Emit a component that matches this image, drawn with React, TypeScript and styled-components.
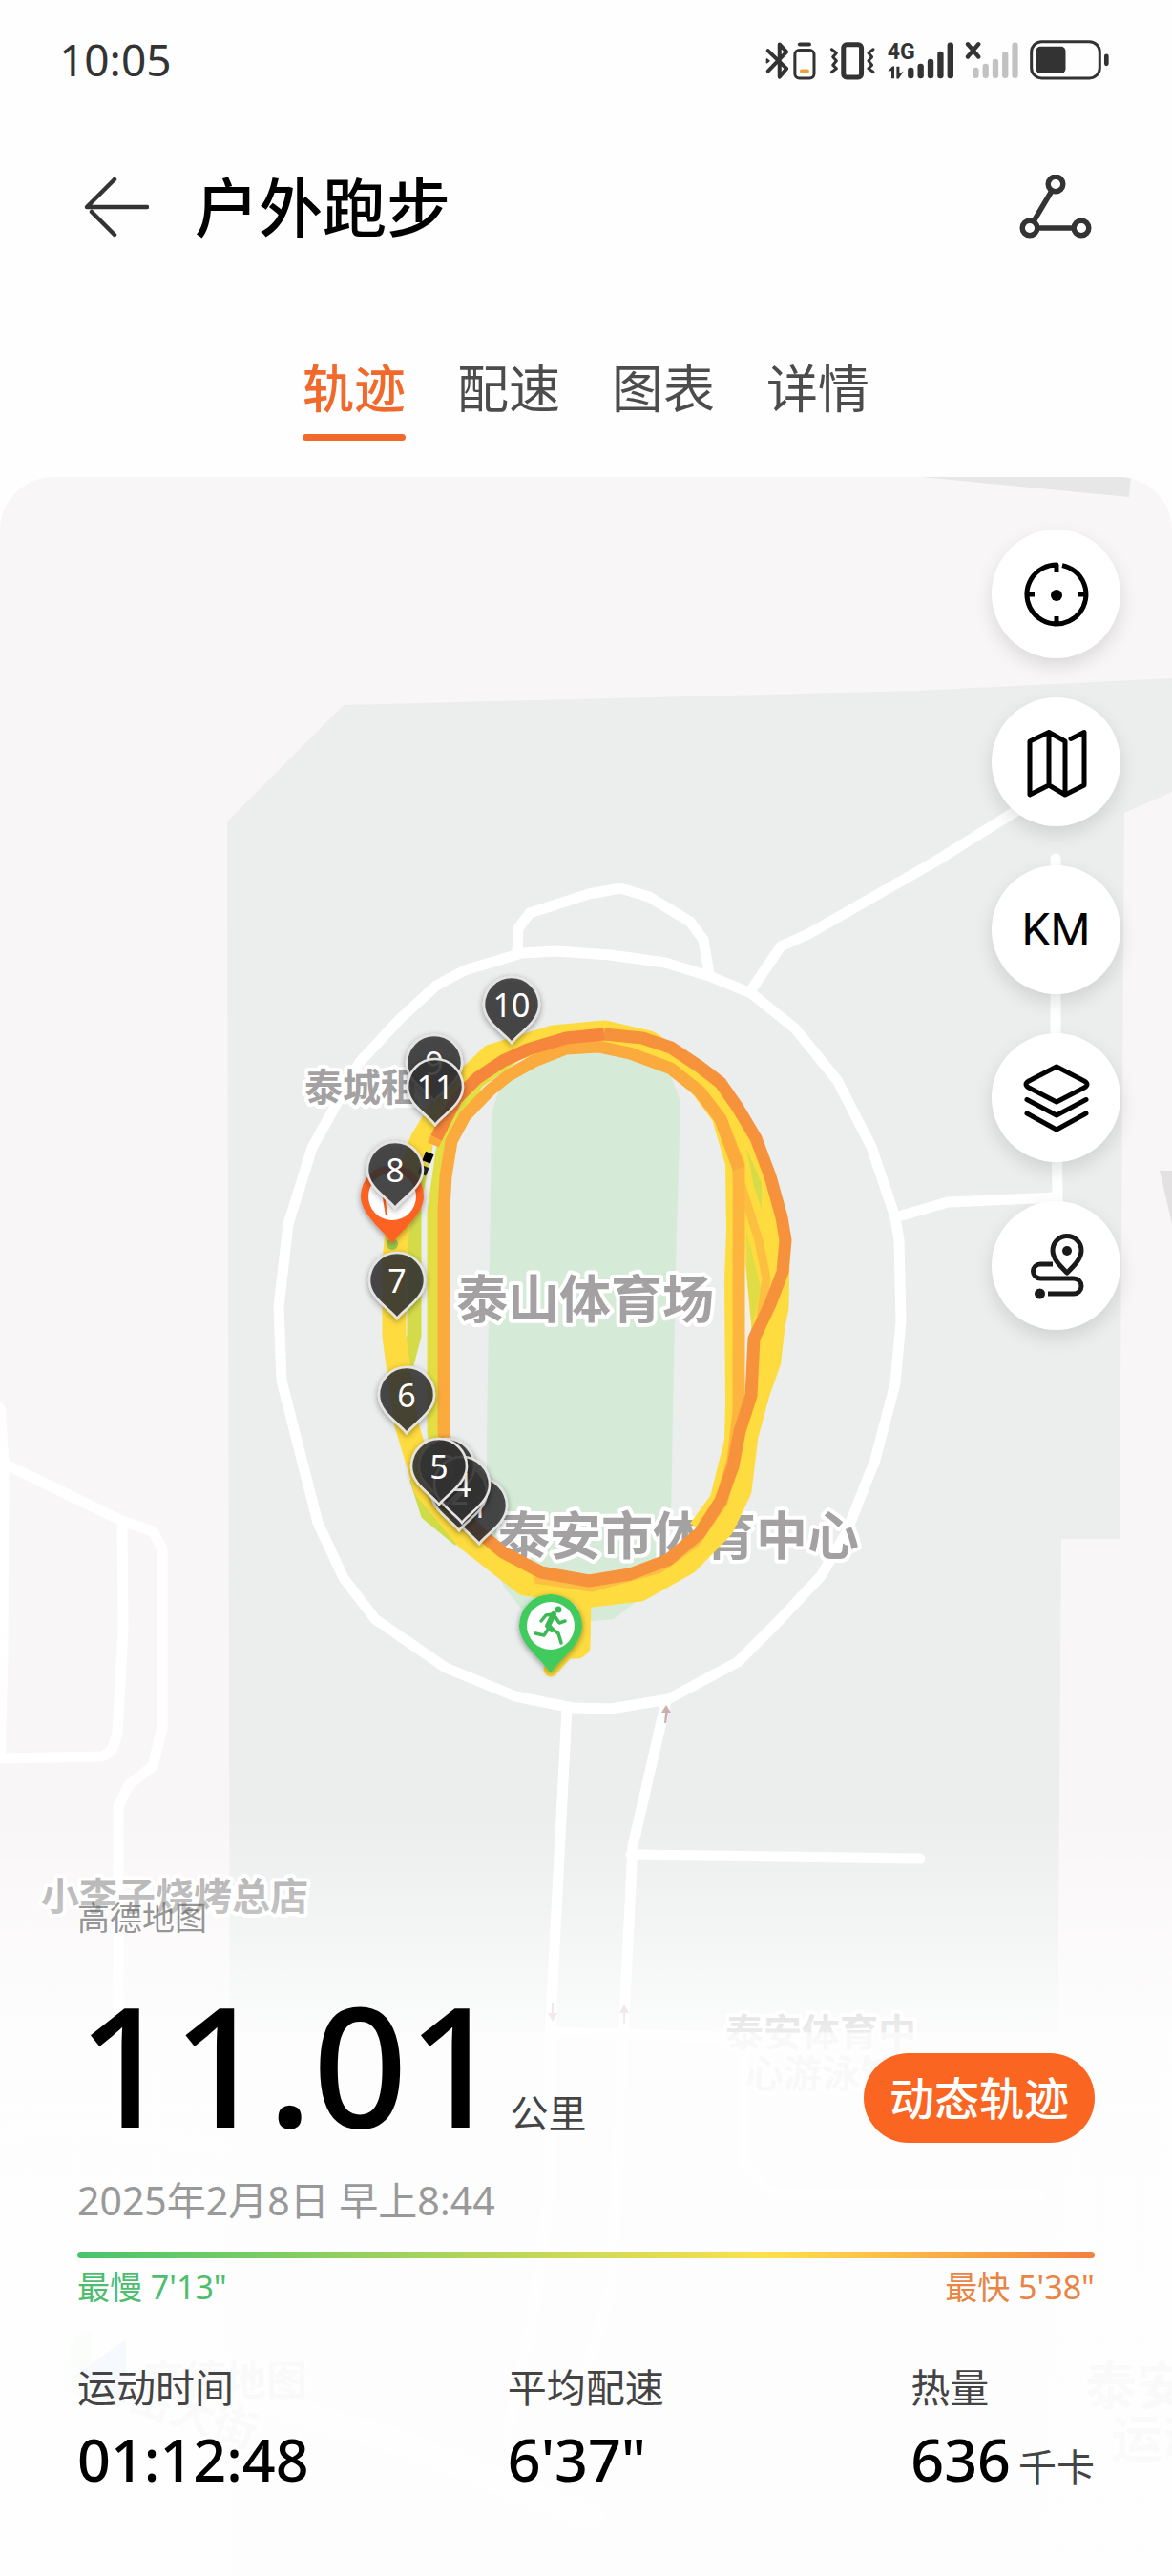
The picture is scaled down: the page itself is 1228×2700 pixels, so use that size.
import React, { useState } from "react";
import styled, { createGlobalStyle } from "styled-components";

const sans = `"Noto Sans", "Noto Sans CJK SC", sans-serif`;

const GlobalStyle = createGlobalStyle`
  *, *::before, *::after { box-sizing: border-box; }
  body { margin: 0; background: #fefefe; font-family: ${sans}; color: #000; }
  button { font-family: inherit; border: 0; padding: 0; background: none; color: inherit; cursor: pointer; }
  h1, p, dl, dd, dt { margin: 0; }
  svg { display: block; }
`;

const Page = styled.div`
  min-height: 100vh;
  display: flex;
  flex-direction: column;
`;

const StatusBar = styled.div`
  height: 124px;
  padding: 0 64px 0 62px;
  display: flex;
  align-items: center;
  justify-content: space-between;
  color: #333;
`;

const Clock = styled.time`
  font-size: 46px;
  line-height: 48px;
`;

const StatusIcons = styled.div`
  display: flex;
  align-items: center;
  gap: 10px;
`;

const NetworkType = styled.text`
  font-family: Roboto, sans-serif;
  font-size: 69px;
  font-weight: 700;
`;

const Header = styled.header`
  height: 186px;
  padding: 0 82px 0 82px;
  display: flex;
  align-items: center;
  gap: 42px;
`;

const IconButton = styled.button<{ $end?: boolean }>`
  width: 80px;
  height: 80px;
  display: grid;
  place-items: center;
  margin-left: ${(p) => (p.$end ? "auto" : "0")};
`;

const Title = styled.h1`
  font-size: 67px;
  line-height: 80px;
  font-weight: 500;
`;

const Tabs = styled.div`
  display: flex;
  justify-content: center;
  gap: 54px;
  padding: 61px 0 38px;
`;

const Tab = styled.button<{ $active: boolean }>`
  font-size: 54px;
  line-height: 72px;
  font-weight: ${(p) => (p.$active ? 500 : 400)};
  color: ${(p) => (p.$active ? "#f26a2b" : "#4c4c4c")};

  &::after {
    content: "";
    display: block;
    height: 7px;
    margin-top: 12px;
    border-radius: 4px;
    background: ${(p) => (p.$active ? "#f26a2b" : "transparent")};
  }
`;

const MapSection = styled.main`
  position: relative;
  flex: 1;
  display: flex;
  flex-direction: column;
  overflow: hidden;
  border-radius: 56px 56px 0 0;
  background: #f9f6f7;
`;

const MapCanvas = styled.svg`
  position: absolute;
  inset: 0;
  width: 100%;
  height: 100%;
`;

const MapLabel = styled.text<{ $size: number }>`
  font-family: ${sans};
  font-size: ${(p) => p.$size}px;
  font-weight: 700;
  fill: #a3a1a2;
  stroke: #fff;
  stroke-width: 8px;
  stroke-linejoin: round;
  paint-order: stroke;
`;

const PinNumber = styled.text`
  font-family: ${sans};
  font-size: 34px;
  fill: #fff;
  text-anchor: middle;
`;

const Tools = styled.div`
  position: relative;
  align-self: flex-end;
  display: flex;
  flex-direction: column;
  gap: 41px;
  padding: 55px 54px 60px;
`;

const ToolButton = styled.button`
  width: 135px;
  height: 135px;
  border-radius: 50%;
  background: #fff;
  color: #000;
  display: grid;
  place-items: center;
  box-shadow: 0 8px 20px rgba(0, 0, 0, 0.12);
  font-family: Roboto, sans-serif;
  font-size: 48px;
  line-height: 56px;
`;

const Summary = styled.section`
  position: relative;
  margin-top: auto;
  padding: 88px 81px 90px;
  background: linear-gradient(
    to bottom,
    rgba(255, 255, 255, 0) 0,
    rgba(255, 255, 255, 0.8) 230px,
    rgba(254, 254, 254, 0.94) 231px,
    rgba(254, 254, 254, 0.96) 100%
  );
`;

const Attribution = styled.p`
  font-size: 34px;
  line-height: 44px;
  color: rgba(90, 90, 90, 0.65);
`;

const DistanceRow = styled.div`
  display: flex;
  align-items: baseline;
  gap: 8px;
  margin-top: 44px;
`;

const Distance = styled.span`
  font-size: 174px;
  line-height: 174px;
  font-weight: 500;
`;

const Unit = styled.span`
  font-size: 40px;
  line-height: 48px;
  font-weight: 400;
  color: #444;
`;

const ReplayButton = styled.button`
  align-self: flex-end;
  margin: 0 0 4px auto;
  padding: 0 27px;
  height: 94px;
  border-radius: 47px;
  background: #fb6522;
  color: #fff;
  font-size: 47px;
  line-height: 56px;
  font-weight: 500;
`;

const DateLine = styled.p`
  margin-top: 32px;
  font-size: 41px;
  line-height: 48px;
  color: #999;
`;

const PaceBar = styled.div`
  height: 7px;
  margin-top: 30px;
  border-radius: 4px;
  background: linear-gradient(to right, #48c46c, #d0da55 50%, #fee04a 68%, #f3803f);
`;

const PaceRange = styled.div`
  display: flex;
  justify-content: space-between;
  margin-top: 10px;
  font-size: 34px;
  line-height: 40px;
`;

const PaceEnd = styled.span<{ $color: string }>`
  color: ${(p) => p.$color};
`;

const Stats = styled.dl`
  display: grid;
  grid-template-columns: 16fr 15fr auto;
  margin-top: 61px;
`;

const StatLabel = styled.dt`
  font-size: 41px;
  line-height: 48px;
  color: #444;
`;

const StatValue = styled.dd`
  margin-top: 20px;
  display: flex;
  align-items: baseline;
  gap: 8px;
  height: 64px;
  font-size: 61px;
  line-height: 64px;
  font-weight: 500;
`;

/* ---------- status bar drawings ---------- */

const BluetoothIcon = () => (
  <svg width="57" height="47" viewBox="60 50 170 140" fill="none" stroke="#333" strokeWidth="12" strokeLinejoin="round" strokeLinecap="round">
    <path d="M74 92 L132 148 L110 174 V72 L132 96 L74 156" />
    <path d="M70 118 v12 l8 -6z" fill="#333" strokeWidth="4" />
    <rect x="158" y="90" width="60" height="88" rx="14" strokeWidth="9" />
    <path d="M173 72 H203" />
    <path d="M179 156 H197" stroke="#eca43a" />
  </svg>
);

const VibrateIcon = () => (
  <svg width="52" height="47" viewBox="255 50 155 140" fill="none" stroke="#333" strokeWidth="9" strokeLinejoin="round" strokeLinecap="round">
    <rect x="305" y="73" width="56" height="102" rx="10" strokeWidth="15" />
    <path d="M268 88 l15 11 -11 13 11 12 -11 13 11 11 -15 11 M398 88 l-15 11 11 13 -11 12 11 13 -11 11 15 11" />
  </svg>
);

const bars = [
  [0, 34],
  [31, 46],
  [62, 61],
  [93, 85],
  [124, 113],
];

const SignalIcon = () => (
  <svg width="72" height="47" viewBox="440 50 215 140" fill="#333" overflow="visible">
    <NetworkType x="442" y="119">4G</NetworkType>
    <path d="M444 156 L458 141 h6 v38 h-9 v-24z M471 142 h9 v22 l13 -8 -15 24 h-7z" />
    {bars.map(([x, h]) => (
      <rect key={x} x={506 + x} y={179 - h} width="19" height={h} rx="9" />
    ))}
  </svg>
);

const NoSimIcon = () => (
  <svg width="57" height="47" viewBox="688 50 172 140">
    <path d="M697 71 L731 111 M731 71 L697 111" stroke="#333" strokeWidth="13" strokeLinecap="round" />
    {bars.map(([x, h]) => (
      <rect key={x} x={713 + x} y={179 - h} width="19" height={h} rx="9" fill="#c2c2c2" />
    ))}
  </svg>
);

const BatteryIcon = () => (
  <svg width="86" height="47" viewBox="893 50 257 140">
    <rect x="901" y="64" width="214" height="114" rx="32" fill="none" stroke="#333" strokeWidth="9" />
    <rect x="915" y="79" width="93" height="84" rx="14" fill="#333" />
    <rect x="1129" y="102" width="14" height="38" rx="7" fill="#333" />
  </svg>
);

/* ---------- header drawings ---------- */

const BackIcon = () => (
  <svg width="68" height="66" viewBox="0 0 68 66" fill="none" stroke="#333" strokeWidth="4.5" strokeLinecap="round" strokeLinejoin="round">
    <path d="M66 33 H3 L32 4 M8 38 L32 62" />
  </svg>
);

const ShareIcon = () => (
  <svg width="76" height="68" viewBox="0 0 76 68" fill="none" stroke="#333" strokeWidth="5.5">
    <circle cx="38" cy="10" r="7.8" />
    <circle cx="11" cy="56" r="7.8" />
    <circle cx="65" cy="56" r="7.8" />
    <path d="M34 17 L15 49 M19 56 H57" />
  </svg>
);

/* ---------- map tool drawings ---------- */

const ToolSvg = styled.svg.attrs({ width: 72, height: 72, viewBox: "0 0 72 72" })`
  fill: none;
  stroke: currentColor;
  stroke-width: 5px;
  stroke-linecap: round;
  stroke-linejoin: round;
  overflow: visible;
`;

const LocateIcon = () => (
  <ToolSvg>
    <path d="M42 5.6 A31 31 0 1 1 36 5 V13 M5 36 H13 M67 36 H59 M36 67 V59" strokeLinecap="butt" />
    <circle cx="36" cy="37" r="6" fill="currentColor" stroke="none" />
  </ToolSvg>
);

const MapIcon = () => (
  <ToolSvg>
    <path d="M51 11.5 L65 4.5 V60 L45 70 L28 60 L8 70 V14 L28 4.5 L45 14 V70 M28 4.5 V60" />
  </ToolSvg>
);

const LayersIcon = () => (
  <ToolSvg>
    <path d="M36 3 L65 18 Q71 21.5 65 25 L36 40 L7 25 Q1 21.5 7 18 Z M5 37.5 L36 54 L67 37.5 M5 52 L36 69 L67 52" />
  </ToolSvg>
);

const RouteIcon = () => (
  <ToolSvg>
    <g stroke="#1a1a1a" strokeLinecap="butt">
      <path d="M47 43 C41 37 32 29 32 19.500 a15 15 0 0 1 30 0 C62 29 53 37 47 43Z" />
      <path d="M32 34 H19 a7.500 7.500 0 0 0 0 15 H54 a8 8 0 0 1 0 16 H27" />
      <circle cx="47" cy="20" r="5" fill="#1a1a1a" stroke="none" />
      <circle cx="18.500" cy="65" r="5.500" fill="#1a1a1a" stroke="none" />
    </g>
  </ToolSvg>
);

/* ---------- map ---------- */

const roads = [
  "M540 1001 L547 999 583 997 640 1001 697 1009 743 1023 787 1041 833 1078 877 1132 913 1202 938 1276 942 1300 944 1385 938 1450 917 1530 887 1606 860 1652 813 1702 773 1742 700 1781 640 1791 600 1790 540 1778 467 1748 393 1697 360 1654 333 1596 295 1447 292 1370 302 1283 327 1203 377 1113 420 1067 457 1033 487 1017Z",
  "M542 998 L543 973 555 957 617 937 650 931 680 940 723 966 737 985 743 1020",
  "M787 1038 L818 992 847 979 980 903 1060 853 1106 826",
  "M1106 900 L1106 1080 1108 1255 993 1260 938 1276",
  "M1108 1255 V1340",
  "M0 1476 L4 1534 3 1735 0 1843 107 1841 117 1835 123 1817 129 1708 128 1594",
  "M4 1534 L128 1594 160 1605 170 1623 170 1811 160 1851 135 1871 124 1893 124 2230",
  "M594 1791 L577 2118 575 2300 558 2430 530 2560",
  "M697 1787 L663 1935 654 2118 640 2400 610 2500",
  "M661 1944 L964 1948",
  "M577 2130 L780 2136 V2270 L808 2300 H1090",
  "M0 2240 Q30 2225 110 2232 L240 2252",
];

const mainTrack =
  "M633 1084 L593 1088 553 1100 527 1112 500 1130 478 1152 462 1183";
const mainTrackRight =
  "M503 1607 L527 1627 567 1648 617 1657 660 1650 700 1635 733 1607 755 1573 768 1537 775 1500 787 1463 790 1403 807 1367 820 1333 823 1300 819 1276 807 1233 792 1193 773 1161 755 1135 733 1118 703 1098 673 1088 633 1084";

const kmPins: [string, number, number][] = [
  ["1", 502, 1579],
  ["2", 481, 1565],
  ["3", 468, 1538],
  ["4", 484, 1557],
  ["5", 460, 1538],
  ["6", 426, 1463],
  ["7", 416, 1343],
  ["8", 414, 1227],
  ["9", 455, 1115],
  ["10", 536, 1054],
  ["11", 456, 1140],
];

const KmPin = ({ label, x, y }: { label: string; x: number; y: number }) => (
  <g transform={`translate(${x} ${y})`}>
    <path
      d="M0 39 C-7 29 -29 18 -29 -1 A29 29 0 0 1 29 -1 C29 18 7 29 0 39Z"
      fill="#333"
      fillOpacity="0.84"
      stroke="#e6e4e3"
      strokeWidth="2.5"
      filter="url(#pinShadow)"
    />
    <PinNumber y="12">{label}</PinNumber>
  </g>
);

const BigPin = ({ x, y, color, children }: { x: number; y: number; color: string; children: React.ReactNode }) => (
  <g transform={`translate(${x} ${y})`}>
    <path d="M0 50 C-8 36 -33 20 -33 0 A33 33 0 0 1 33 0 C33 20 8 36 0 50Z" fill={color} filter="url(#pinShadow)" />
    <circle r="25" fill="#fff" />
    {children}
  </g>
);

const TrackMap = () => (
  <MapCanvas viewBox="0 500 1228 2200" preserveAspectRatio="xMidYMin slice" role="img" aria-label="泰山体育场跑步轨迹">
    <defs>
      <filter id="pinShadow" x="-30%" y="-30%" width="160%" height="160%">
        <feDropShadow dx="0" dy="2" stdDeviation="3" floodColor="#000" floodOpacity="0.4" />
      </filter>
    </defs>

    <path d="M238 861 L360 739 960 724 1228 711 V830 L1178 852 1173 1613 H1112 L1107 2300 1090 2700 H242Z" fill="#ebeeed" />
    <path d="M965 500 L1183 521 1185 500Z" fill="#e8e7e7" />
    <path d="M1215 1227 H1228 V1283Z" fill="#e3e1e2" />
    <path
      d="M515 1167 L525 1135 560 1110 610 1098 640 1103 703 1127 713 1155 708 1330 703 1590 690 1660 643 1697 615 1700 547 1687 527 1662 510 1600 510 1500 513 1320Z"
      fill="#d5ebd8"
    />

    <g fill="none" stroke="#fff" strokeWidth="11" strokeLinejoin="round" strokeLinecap="round">
      {roads.map((d) => (
        <path key={d} d={d} />
      ))}
      <path d="M0 2435 L150 2480 420 2560 620 2640" strokeWidth="26" />
    </g>

    <g fill="#cdaeb0">
      <path d="M698 1787 l5 8 h-3 l-2 11 h-2 l1 -11 h-4z" />
      <path d="M654 2101 l5 9 h-4 v11 h-2 v-11 h-4z" />
      <path d="M579 2119 l5 -9 h-4 v-11 h-2 v11 h-4z" />
    </g>

    <MapLabel x="478" y="1382" $size={54}>泰山体育场</MapLabel>
    <MapLabel x="522" y="1630" $size={54}>泰安市体育中心</MapLabel>
    <MapLabel x="319" y="1154" $size={40}>泰城租</MapLabel>
    <MapLabel x="43" y="2002" $size={40}>小李子烧烤总店</MapLabel>
    <MapLabel x="760" y="2145" $size={40}>泰安体育中</MapLabel>
    <MapLabel x="781" y="2188" $size={40}>心游泳馆</MapLabel>
    <MapLabel x="1137" y="2521" $size={54}>泰安</MapLabel>
    <MapLabel x="1164" y="2577" $size={54}>运动</MapLabel>
    <MapLabel x="88" y="2510" $size={46} transform="rotate(18 88 2510)">泰岳大街</MapLabel>
    <path d="M74 2462 q0 -18 22 -18 v70 q-22 0 -22 -16z" fill="#b5e8a0" />
    <path d="M78 2490 L132 2452 V2520 Q100 2500 78 2490Z" fill="#4a9cf0" />
    <MapLabel x="150" y="2511" $size={43}>高德地图</MapLabel>

    <g fill="none" strokeLinejoin="round">
      <path d="M446 1200 L434 1260 434 1400 426 1430" stroke="#d3dc48" strokeWidth="15" />
      <path d="M560 1092 L500 1135 464 1200 454 1270 454 1500 460 1540" stroke="#e3df43" strokeWidth="13" />
      <path d="M434 1550 L446 1588 480 1616" stroke="#cfdc48" strokeWidth="10" />
      <path
        d="M633 1082 L580 1087 515 1107 470 1150 442 1195 420 1260 413 1320 413 1400 425 1490 446 1560 490 1613 550 1660 620 1672 670 1666 720 1638 757 1600 775 1562 782 1505 802 1430 814 1370 815 1310 800 1240 762 1160 730 1126 680 1093Z"
        stroke="#fedb3e"
        strokeWidth="25"
      />
      <path d="M760 1165 L790 1200 818 1290 826 1360 818 1430 793 1500 785 1570 760 1590 740 1590 770 1500 787 1440 787 1390 781 1330 777 1210Z" fill="#fedb3e" />
      <path d="M728 1140 L752 1172 766 1220 767 1290 765 1340 766 1470 765 1510 750 1570 728 1600" stroke="#fedb3e" strokeWidth="12" />
      <path d="M612 1675 L611 1727 606 1731 594 1731 577 1750" stroke="#fedb3e" strokeWidth="15" strokeLinecap="round" />
      <path d="M782 1204 L798 1240 798 1267 790 1244Z" fill="#d6dc48" />
      <path d="M782 1290 L797 1350 788 1392 783 1340Z" fill="#dfdc46" />
      <path d="M781 1325 L787 1390 786 1404 780 1404Z" fill="#f3efe6" />
      <path d="M776 1240 L795 1300 803 1340 797 1380" stroke="#fdbf41" strokeWidth="9" />
      <path d="M774 1500 L758 1575 728 1618 690 1645 620 1664 560 1655" stroke="#fdbf41" strokeWidth="9" />
      <path d="M755 1577 L768 1530 774 1480 774 1221 755 1173" stroke="#fdb540" strokeWidth="13" />
      <path
        d="M774 1225 L755 1173 733 1144 703 1120 660 1104 627 1097 593 1099 560 1112 533 1127 513 1143 487 1170 473 1196 467 1233 465 1267 465 1500 470 1540"
        stroke="#fbab3d"
        strokeWidth="13"
      />
      <path d={mainTrackRight} stroke="#f7923c" strokeWidth="13" />
      <path d={mainTrack} stroke="#f5863b" strokeWidth="13" />
      <path d="M463 1181 L457 1193" stroke="#f5863b" strokeWidth="13" />
      <path d="M457 1193 L454 1200" stroke="#fba83d" strokeWidth="13" />
      <path d="M504 1608 L470 1572" stroke="#f0743a" strokeWidth="13" />
    </g>
    <rect x="444" y="1208" width="9" height="10" fill="#000" transform="rotate(22 448 1213)" />
    <rect x="439" y="1222" width="9" height="9" fill="#222" transform="rotate(22 443 1227)" />
    <circle cx="411" cy="1304" r="6" fill="#9ac94a" />

    <BigPin x={411} y={1254} color="#fc6420">
      <path d="M-9 0 L-6 19" stroke="#fc6420" strokeWidth="2.5" />
    </BigPin>
    {kmPins.map(([label, x, y]) => (
      <KmPin key={label} label={label} x={x} y={y} />
    ))}
    <BigPin x={577} y={1704} color="#3fcb5c">
      <circle cx="8" cy="-17" r="3.5" fill="#3cb955" />
      <path d="M3 -12 L-3 0 L1 4" fill="none" stroke="#3cb955" strokeWidth="6" strokeLinecap="round" strokeLinejoin="round" />
      <path
        d="M2 -12 L-5 -11 L-10 -5 M5 -9 L9 -3 L15 -5 M1 3 L8 8 L11 18 M-3 4 L-7 10 L-16 8"
        fill="none"
        stroke="#3cb955"
        strokeWidth="3.5"
        strokeLinecap="round"
        strokeLinejoin="round"
      />
    </BigPin>
  </MapCanvas>
);

const tabNames = ["轨迹", "配速", "图表", "详情"];

const stats = [
  { label: "运动时间", value: "01:12:48" },
  { label: "平均配速", value: "6'37\"" },
  { label: "热量", value: "636", unit: "千卡" },
];

export default function App() {
  const [active, setActive] = useState(0);

  return (
    <Page>
      <GlobalStyle />
      <StatusBar>
        <Clock>10:05</Clock>
        <StatusIcons>
          <BluetoothIcon />
          <VibrateIcon />
          <SignalIcon />
          <NoSimIcon />
          <BatteryIcon />
        </StatusIcons>
      </StatusBar>

      <Header>
        <IconButton aria-label="返回">
          <BackIcon />
        </IconButton>
        <Title>户外跑步</Title>
        <IconButton $end aria-label="分享">
          <ShareIcon />
        </IconButton>
      </Header>

      <Tabs role="tablist">
        {tabNames.map((name, i) => (
          <Tab key={name} role="tab" aria-selected={i === active} $active={i === active} onClick={() => setActive(i)}>
            {name}
          </Tab>
        ))}
      </Tabs>

      <MapSection>
        <TrackMap />
        <Tools>
          <ToolButton aria-label="定位">
            <LocateIcon />
          </ToolButton>
          <ToolButton aria-label="地图类型">
            <MapIcon />
          </ToolButton>
          <ToolButton>KM</ToolButton>
          <ToolButton aria-label="图层">
            <LayersIcon />
          </ToolButton>
          <ToolButton aria-label="路线">
            <RouteIcon />
          </ToolButton>
        </Tools>

        <Summary>
          <Attribution>高德地图</Attribution>
          <DistanceRow>
            <Distance>11.01</Distance>
            <Unit>公里</Unit>
            <ReplayButton>动态轨迹</ReplayButton>
          </DistanceRow>
          <DateLine>2025年2月8日 早上8:44</DateLine>
          <PaceBar />
          <PaceRange>
            <PaceEnd $color="#4fbd70">最慢 7'13"</PaceEnd>
            <PaceEnd $color="#ea8444">最快 5'38"</PaceEnd>
          </PaceRange>
          <Stats>
            {stats.map((s) => (
              <div key={s.label}>
                <StatLabel>{s.label}</StatLabel>
                <StatValue>
                  {s.value}
                  {s.unit && <Unit>{s.unit}</Unit>}
                </StatValue>
              </div>
            ))}
          </Stats>
        </Summary>
      </MapSection>
    </Page>
  );
}
